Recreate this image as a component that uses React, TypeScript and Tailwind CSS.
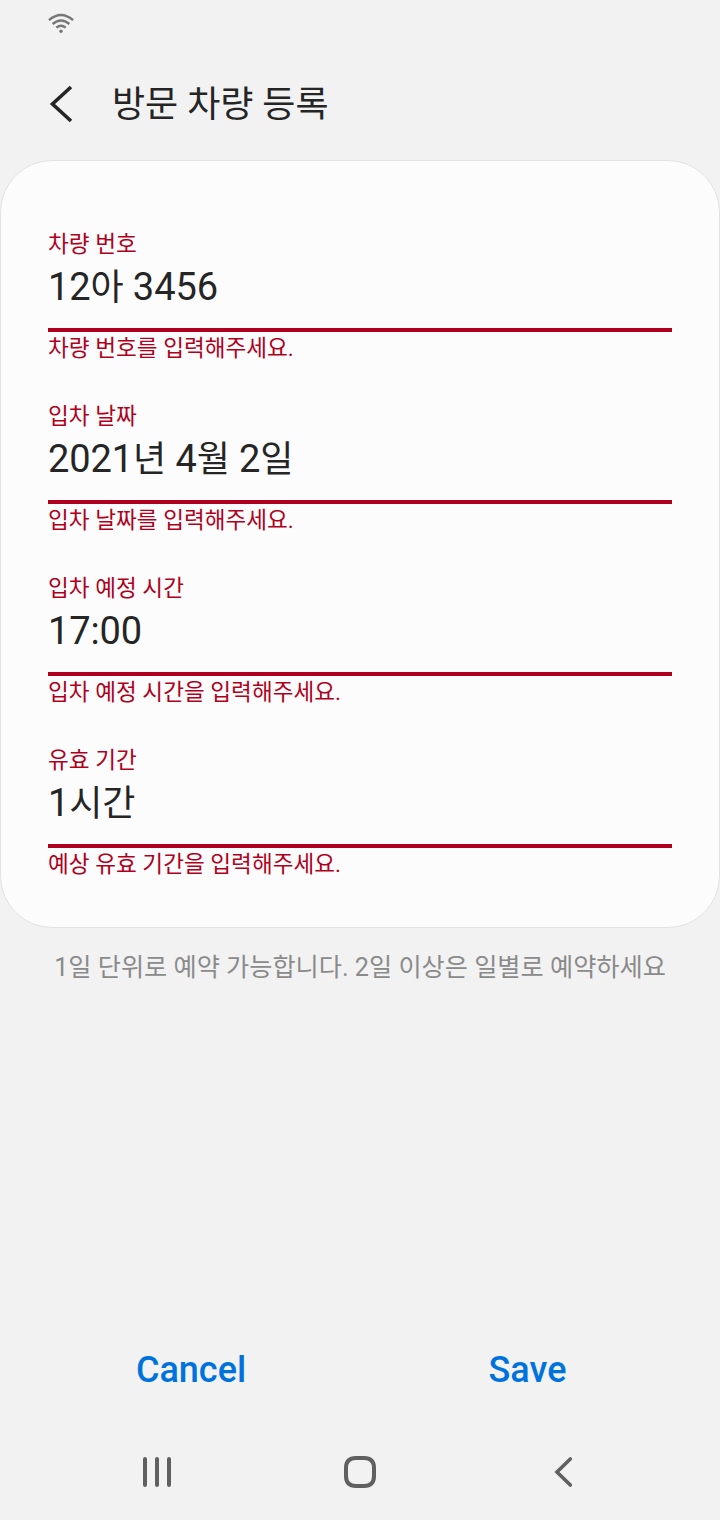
import React from "react";

type Field = { label: string; value: string; error: string };

const fields: Field[] = [
  { label: "차량 번호", value: "12아 3456", error: "차량 번호를 입력해주세요." },
  { label: "입차 날짜", value: "2021년 4월 2일", error: "입차 날짜를 입력해주세요." },
  { label: "입차 예정 시간", value: "17:00", error: "입차 예정 시간을 입력해주세요." },
  { label: "유효 기간", value: "1시간", error: "예상 유효 기간을 입력해주세요." },
];

function StatusBar() {
  return (
    <div className="flex h-12 items-start pl-12 pt-3">
      <svg width="26" height="22" viewBox="0 0 26 22" fill="none" stroke="#777777" strokeWidth="2.4">
        <path d="M0.9 8.2Q13 -2.2 25.1 8.2" />
        <path d="M4.6 12Q13 5 21.4 12" />
        <path d="M8.3 15.6Q13 11.8 17.7 15.6" />
        <circle cx="13" cy="19.3" r="1.7" fill="#777777" stroke="none" />
      </svg>
    </div>
  );
}

/* Hangul runs are set slightly smaller than the digits beside them. */
function MixedText({ text }: { text: string }) {
  return (
    <>
      {text.split(/([가-힣]+)/).map((run, i) =>
        i % 2 === 1 ? (
          <span key={i} className="text-[36px]">
            {run}
          </span>
        ) : (
          run
        ),
      )}
    </>
  );
}

function FieldRow({ label, value, error }: Field) {
  return (
    <div className="h-[172px] text-[22.6px] text-[#b00020]">
      <div className="h-9 leading-[38px]">{label}</div>
      <div className="h-[70px] border-b-4 border-[#b00020] text-[38px] leading-[50px] tracking-[-0.1px] text-[#252525]">
        <MixedText text={value} />
      </div>
      <div className="h-8 leading-[34px]">{error}</div>
    </div>
  );
}

export default function App() {
  return (
    <div className="flex h-[1520px] w-[720px] flex-col whitespace-nowrap bg-[#f2f2f2] font-['Roboto','Noto_Sans_CJK_KR',sans-serif] text-[#252525]">
      <StatusBar />
      <header className="flex h-28 items-center">
        <button className="ml-12 flex w-16" aria-label="Back">
          <svg width="28" height="40" viewBox="0 0 28 40" fill="none" stroke="#252525" strokeWidth="3.6">
            <path d="M23 3L4.5 20L23 37" />
          </svg>
        </button>
        <h1 className="pt-0.5 text-[36px] leading-[50px]">방문 차량 등록</h1>
      </header>
      <main className="h-[768px] rounded-[52px] border border-[#e2e2e2] bg-[#fcfcfc] px-[47px] pt-[65px]">
        {fields.map((f) => (
          <FieldRow key={f.label} {...f} />
        ))}
      </main>
      <p className="mt-[22px] text-center text-[25.2px] leading-9 text-[#8a8a8a]">
        1일 단위로 예약 가능합니다. 2일 이상은 일별로 예약하세요
      </p>
      <div className="flex-1" />
      <div className="mb-1 flex h-[100px] items-center text-[36px] font-medium text-[#0072de]">
        <button className="w-[337px] pl-[45px]">Cancel</button>
        <button className="w-[336px] pl-[45px]">Save</button>
      </div>
      <nav className="flex h-24 items-center">
        <svg width="720" height="96" viewBox="0 0 720 96" fill="none" stroke="#606060" strokeWidth="4" strokeLinecap="round">
          <path d="M145 35V61M157 35V61M169 35V61" />
          <path d="M356 34H364Q374 34 374 44V52Q374 62 364 62H356Q346 62 346 52V44Q346 34 356 34Z" />
          <path d="M570.3 35L557 48L570.3 61" strokeWidth="3.6" />
        </svg>
      </nav>
    </div>
  );
}
